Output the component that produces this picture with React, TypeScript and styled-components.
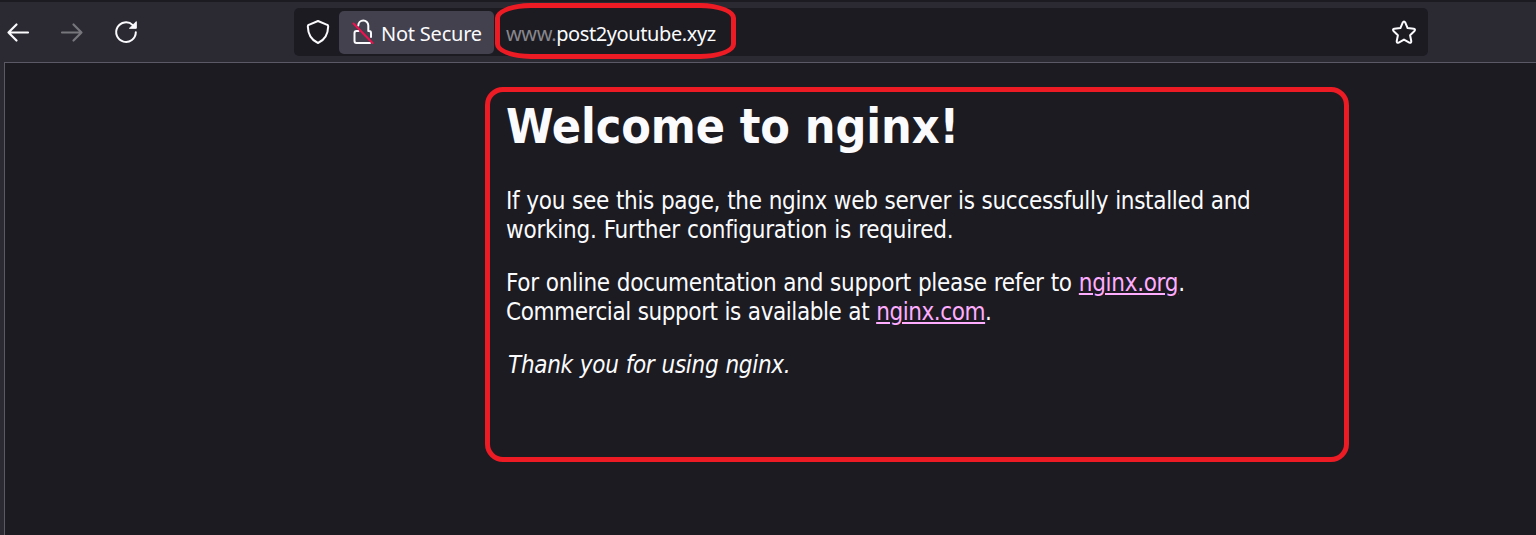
import React from "react";
import styled, { createGlobalStyle } from "styled-components";

const GlobalStyle = createGlobalStyle`
  * { box-sizing: border-box; }
  body { margin: 0; background: #1c1b22; overflow: hidden; }
`;

const Browser = styled.div`
  display: flex;
  flex-direction: column;
  height: 535px;
  width: 1536px;
  background: #2b2a33;
  border-top: 2px solid #1c1b22;
`;

const Toolbar = styled.header`
  display: flex;
  height: 60px;
  padding-top: 6px;
`;

const NavButtons = styled.nav`
  display: flex;
  width: 294px;
`;

const NavButton = styled.button<{ $dim?: boolean }>`
  width: 54px;
  height: 48px;
  padding: 0;
  border: 0;
  background: none;
  color: ${(p) => (p.$dim ? "#77767d" : "#fbfbfe")};
  svg { display: block; }
`;

const AddressBar = styled.div`
  display: flex;
  align-items: center;
  position: relative;
  width: 1134px;
  height: 48px;
  border-radius: 5px;
  background: #1c1b22;
  color: #fbfbfe;
  font: 20px/46px "Noto Sans", sans-serif;
  svg { display: block; flex: none; }
`;

const ShieldSlot = styled.span`
  width: 45px;
`;

const Identity = styled.div`
  display: flex;
  width: 155px;
  height: 43px;
  border-radius: 5px;
  background: #42414d;
`;

const IdentityLabel = styled.span`
  white-space: nowrap;
  line-height: 45px;
  letter-spacing: -0.22px;
`;

const Url = styled.span`
  flex: 1;
  padding: 3px 0 0 12px;
  white-space: nowrap;
  line-height: 45px;
  letter-spacing: -0.4px;
`;

const Subdomain = styled.span`
  color: #87868c;
`;

const UrlMark = styled.div`
  position: absolute;
  left: 201px;
  top: -5px;
  width: 241px;
  height: 56px;
  border: 5px solid #ed1c24;
  border-radius: 36px / 15px;
`;

const Viewport = styled.main`
  flex: 1;
  margin-left: 4px;
  padding: 24px 0 0 480px;
  border: solid #5b5966;
  border-width: 1px 0 0 1px;
  background: #1c1b22;
`;

const Welcome = styled.article`
  width: 864px;
  height: 375px;
  padding: 5px 16px 0;
  border: 5px solid #ed1c24;
  border-radius: 18px;
  color: #fbfbfe;
  font: 24px/29px "DejaVu Sans Condensed", "DejaVu Sans", sans-serif;
  font-stretch: condensed;
`;

const Title = styled.h1`
  margin: 0 0 32px;
  font-size: 48px;
  line-height: 58px;
  font-weight: 700;
  letter-spacing: -0.1px;
  white-space: nowrap;
`;

const Paragraph = styled.p`
  margin: 0 0 24px;
`;

const Line = styled.span<{ $tracking: number }>`
  display: block;
  white-space: nowrap;
  letter-spacing: ${(p) => p.$tracking}px;
  word-spacing: 0.5px;
`;

const Thanks = styled.em`
  padding-left: 2px;
`;

const Link = styled.a`
  color: #ffadff;
  text-decoration: underline;
  text-decoration-thickness: 2px;
  text-underline-offset: 2px;
`;

export default function App() {
  return (
    <>
      <GlobalStyle />
      <Browser>
        <Toolbar>
          <NavButtons>
            <NavButton aria-label="Back">
              <svg width="54" height="48" fill="none" stroke="currentColor" strokeWidth="2.2" strokeLinecap="round" strokeLinejoin="round">
                <path d="M28 24.500H8.500M16.500 16.500l-8 8 8 8" />
              </svg>
            </NavButton>
            <NavButton aria-label="Forward" $dim>
              <svg width="54" height="48" fill="none" stroke="currentColor" strokeWidth="2.2" strokeLinecap="round" strokeLinejoin="round">
                <path d="M8 24.500h19.500M19.500 16.500l8 8-8 8" />
              </svg>
            </NavButton>
            <NavButton aria-label="Reload">
              <svg width="54" height="48" fill="none" stroke="currentColor" strokeWidth="2" strokeLinecap="round">
                <path d="M27.800 24.300a9.800 9.800 0 1 1-3-7.200" />
                <path d="M28.300 14v6.300H21.800z" fill="currentColor" strokeWidth="1" strokeLinejoin="round" />
              </svg>
            </NavButton>
          </NavButtons>
          <AddressBar>
            <ShieldSlot>
              <svg width="45" height="48" fill="none" stroke="currentColor" strokeWidth="2" strokeLinejoin="round">
                <path d="M24 13l9.200 3.800c.8.3 1 .8 1 1.600C34 26.200 31 32 24 35 17 32 14 26.200 13.800 18.400c0-.8.2-1.300 1-1.600z" />
              </svg>
            </ShieldSlot>
            <Identity>
              <svg width="42" height="43" fill="none" stroke="currentColor" strokeWidth="2" strokeLinecap="round" strokeLinejoin="round">
                <path d="M19.300 14.500a5 5 0 0 1 10 0V20H30a2 2 0 0 1 2 2v4M19.500 20H17.500a2 2 0 0 0-2 2V30a2 2 0 0 0 2 2H31" />
                <path d="M14.500 12.500l19 19.500" stroke="#f0104e" />
              </svg>
              <IdentityLabel>Not Secure</IdentityLabel>
            </Identity>
            <Url><Subdomain>www.</Subdomain>post2youtube.xyz</Url>
            <svg width="48" height="48" fill="none" stroke="currentColor" strokeWidth="2" strokeLinejoin="round">
              <path d="M22.700 14.600q1.300-2.200 2.600 0l2.300 5.500 6.200.7q2 .5.700 2.200l-4.400 4.200 1.200 6q0 2.100-2 1.400L24 31.600l-5.300 3q-2 .7-2-1.400l1.200-6-4.400-4.200q-1.300-1.700.7-2.200l6.200-.7z" />
            </svg>
            <UrlMark />
          </AddressBar>
        </Toolbar>
        <Viewport>
          <Welcome>
            <Title>Welcome to nginx!</Title>
            <Paragraph>
              <Line $tracking={-0.33}>If you see this page, the nginx web server is successfully installed and</Line>
              <Line $tracking={-0.24}>working. Further configuration is required.</Line>
            </Paragraph>
            <Paragraph>
              <Line $tracking={-0.31}>For online documentation and support please refer to <Link>nginx.org</Link>.</Line>
              <Line $tracking={-0.43}>Commercial support is available at <Link>nginx.com</Link>.</Line>
            </Paragraph>
            <Paragraph>
              <Line $tracking={-0.3}><Thanks>Thank you for using nginx.</Thanks></Line>
            </Paragraph>
          </Welcome>
        </Viewport>
      </Browser>
    </>
  );
}
